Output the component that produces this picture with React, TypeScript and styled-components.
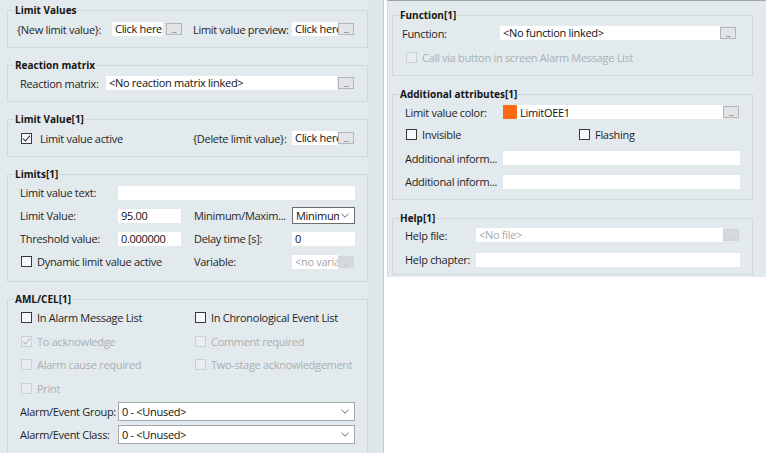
import React from 'react';
import styled, { createGlobalStyle } from 'styled-components';

const GlobalStyle = createGlobalStyle`
    html, body {
        margin: 0;
        padding: 0;
        background: #fff;
    }
    body {
        font-family: "Open Sans", "Noto Sans", sans-serif;
        font-size: 11px;
        letter-spacing: -0.3px;
        color: #1f1f1f;
        overflow: hidden;
    }
    * {
        box-sizing: border-box;
    }
`;

const Screen = styled.div`
    display: flex;
    align-items: flex-start;
    gap: 3px;
    width: 766px;
    height: 453px;
`;

const LeftPane = styled.div`
    display: flex;
    width: 384px;
    height: 453px;
    background: #e3eaed;
    overflow: hidden;
`;

const LeftContent = styled.div`
    flex: 1;
    padding: 3px 0 0 7px;
    display: flex;
    flex-direction: column;
    gap: 10px;
`;

const ScrollTrack = styled.div`
    width: 16px;
    height: 100%;
    background: #dfe6e9;
    border-right: 1px solid #c6cdd0;
`;

const RightPane = styled.div`
    width: 379px;
    height: 277px;
    background: #e3eaed;
    border-top: 1px solid #a2a6a8;
    border-left: 1px solid #d3dadd;
    padding: 7px 13px 0 4px;
    display: flex;
    flex-direction: column;
    gap: 11px;
`;

const Group = styled.fieldset<{ $padBottom?: number }>`
    margin: 0;
    min-width: 0;
    width: 361px;
    padding: 0 12px ${(p) => p.$padBottom ?? 8}px 12px;
    border: 1px solid #d0d8db;
`;

const Legend = styled.legend`
    margin-left: -6px;
    padding: 0 1px;
    font-size: 10px;
    font-weight: 700;
    line-height: 14px;
    letter-spacing: 0;
    color: #141414;
`;

const Row = styled.div<{ $h: number; $mt?: number }>`
    display: flex;
    align-items: center;
    height: ${(p) => p.$h}px;
    margin-top: ${(p) => p.$mt ?? 0}px;
`;

const FormGrid = styled.div<{ $cols: string; $row: number }>`
    display: grid;
    grid-template-columns: ${(p) => p.$cols};
    grid-auto-rows: ${(p) => p.$row}px;
    align-items: center;
`;

const Label = styled.span<{ $w?: number; $dim?: boolean; $shift?: number }>`
    flex: none;
    width: ${(p) => (p.$w ? `${p.$w}px` : 'auto')};
    margin-left: ${(p) => p.$shift ?? 0}px;
    white-space: nowrap;
    overflow: hidden;
    color: ${(p) => (p.$dim ? '#a8b0b3' : '#1f1f1f')};
`;

const TextBox = styled.div<{ $w: number; $dim?: boolean; $span?: number }>`
    flex: none;
    width: ${(p) => p.$w}px;
    height: 14px;
    padding: 0 3px;
    background: #fff;
    line-height: 14px;
    white-space: nowrap;
    overflow: hidden;
    color: ${(p) => (p.$dim ? '#a3a7a9' : '#111')};
    grid-column: ${(p) => (p.$span ? `span ${p.$span}` : 'auto')};
`;

const DotsButton = styled.div<{ $disabled?: boolean; $ml?: number }>`
    flex: none;
    width: 16px;
    height: 12px;
    margin-left: ${(p) => p.$ml ?? 0}px;
    border: 1px solid ${(p) => (p.$disabled ? '#d2d6d8' : '#b2b6b8')};
    background: ${(p) => (p.$disabled ? '#d6dadc' : '#e2e4e5')};
    color: ${(p) => (p.$disabled ? '#b4b8ba' : '#4a4a4a')};
    font-size: 8px;
    line-height: 11px;
    text-align: center;
    letter-spacing: -0.5px;
`;

const Field = styled.div<{ $span?: number }>`
    display: flex;
    align-items: center;
    grid-column: ${(p) => (p.$span ? `span ${p.$span}` : 'auto')};
`;

const SelectBox = styled.div<{ $w: number; $h: number; $strong?: boolean }>`
    flex: none;
    display: flex;
    align-items: center;
    justify-content: space-between;
    width: ${(p) => p.$w}px;
    height: ${(p) => p.$h}px;
    padding: 0 5px 0 3px;
    background: #fff;
    border: 1px solid ${(p) => (p.$strong ? '#6c6c6c' : '#a2a8ab')};
    color: #111;
`;

const SelectValue = styled.span<{ $w?: number }>`
    width: ${(p) => (p.$w ? `${p.$w}px` : 'auto')};
    white-space: nowrap;
    overflow: hidden;
`;

const CheckLabel = styled.label<{ $disabled?: boolean; $gap: number }>`
    display: flex;
    align-items: center;
    gap: ${(p) => p.$gap}px;
    margin-left: 1px;
    white-space: nowrap;
    color: ${(p) => (p.$disabled ? '#a8b0b3' : '#1f1f1f')};
`;

const Box = styled.span<{ $disabled?: boolean }>`
    flex: none;
    display: flex;
    align-items: center;
    justify-content: center;
    width: 11px;
    height: 11px;
    border: 1px solid ${(p) => (p.$disabled ? '#c9d1d4' : '#3a3a3a')};
    background: ${(p) => (p.$disabled ? '#e8eef0' : '#f7f9fa')};
`;

const ColorField = styled.div`
    flex: none;
    display: flex;
    align-items: center;
    gap: 3px;
    width: 220px;
    height: 14px;
    background: #fff;
    white-space: nowrap;
    color: #111;
`;

const Swatch = styled.span<{ $color: string }>`
    width: 14px;
    height: 14px;
    background: ${(p) => p.$color};
`;

const Chevron = () => (
    <svg width="8" height="5" viewBox="0 0 8 5">
        <polyline points="0.5,0.8 4,4.2 7.5,0.8" fill="none" stroke="#6a6a6a" strokeWidth="1" />
    </svg>
);

const Check = ({
    label,
    checked,
    disabled,
    gap = 5,
}: {
    label: string;
    checked?: boolean;
    disabled?: boolean;
    gap?: number;
}) => (
    <CheckLabel $disabled={disabled} $gap={gap}>
        <Box $disabled={disabled}>
            {checked && (
                <svg width="9" height="9" viewBox="0 0 9 9">
                    <polyline
                        points="1,4.6 3.4,7 8,1.6"
                        fill="none"
                        stroke={disabled ? '#b4bcbf' : '#333'}
                        strokeWidth="1.1"
                    />
                </svg>
            )}
        </Box>
        {label}
    </CheckLabel>
);

const Select = ({ value, w, h, strong, valueW }: { value: string; w: number; h: number; strong?: boolean; valueW?: number }) => (
    <SelectBox $w={w} $h={h} $strong={strong}>
        <SelectValue $w={valueW}>{value}</SelectValue>
        <Chevron />
    </SelectBox>
);

export default function App() {
    return (
        <>
            <GlobalStyle />
            <Screen>
                <LeftPane>
                    <LeftContent>
                        <Group $padBottom={10}>
                            <Legend>Limit Values</Legend>
                            <Row $h={16} $mt={4}>
                                <Label $w={95} $shift={-3}>{'{New limit value}:'}</Label>
                                <TextBox $w={51}>Click here</TextBox>
                                <DotsButton $ml={3}>...</DotsButton>
                                <Label $w={99} $shift={11}>Limit value preview:</Label>
                                <TextBox $w={46}>Click here</TextBox>
                                <DotsButton>...</DotsButton>
                            </Row>
                        </Group>

                        <Group $padBottom={10}>
                            <Legend>Reaction matrix</Legend>
                            <Row $h={16} $mt={3}>
                                <Label $w={86}>Reaction matrix:</Label>
                                <TextBox $w={231}>&lt;No reaction matrix linked&gt;</TextBox>
                                <DotsButton $ml={1}>...</DotsButton>
                            </Row>
                        </Group>

                        <Group $padBottom={10}>
                            <Legend>Limit Value[1]</Legend>
                            <Row $h={16} $mt={4}>
                                <Field style={{ width: 173 }}>
                                    <Check label="Limit value active" checked gap={8} />
                                </Field>
                                <Label $w={99}>{'{Delete limit value}:'}</Label>
                                <TextBox $w={46}>Click here</TextBox>
                                <DotsButton>...</DotsButton>
                            </Row>
                        </Group>

                        <Group $padBottom={8}>
                            <Legend>Limits[1]</Legend>
                            <FormGrid $cols="98px 76px 98px 63px" $row={23}>
                                <Label>Limit value text:</Label>
                                <TextBox $w={237} $span={3} />
                                <Label>Limit Value:</Label>
                                <TextBox $w={63}>95.00</TextBox>
                                <Label $w={96}>Minimum/Maxim...</Label>
                                <Select value="Minimum" w={63} h={17} strong valueW={43} />
                                <Label>Threshold value:</Label>
                                <TextBox $w={63}>0.000000</TextBox>
                                <Label>Delay time [s]:</Label>
                                <TextBox $w={63}>0</TextBox>
                                <Field $span={2}>
                                    <Check label="Dynamic limit value active" />
                                </Field>
                                <Label>Variable:</Label>
                                <Field>
                                    <TextBox $w={46} $dim>&lt;no variable&gt;</TextBox>
                                    <DotsButton $disabled>...</DotsButton>
                                </Field>
                            </FormGrid>
                        </Group>

                        <Group $padBottom={8}>
                            <Legend>AML/CEL[1]</Legend>
                            <FormGrid $cols="174px 1fr" $row={23.5}>
                                <Check label="In Alarm Message List" />
                                <Check label="In Chronological Event List" />
                                <Check label="To acknowledge" checked disabled />
                                <Check label="Comment required" disabled />
                                <Check label="Alarm cause required" disabled />
                                <Check label="Two-stage acknowledgement" disabled />
                                <Check label="Print" disabled />
                            </FormGrid>
                            <Row $h={23}>
                                <Label $w={98}>Alarm/Event Group:</Label>
                                <Select value="0 - <Unused>" w={237} h={19} />
                            </Row>
                            <Row $h={23}>
                                <Label $w={98}>Alarm/Event Class:</Label>
                                <Select value="0 - <Unused>" w={237} h={19} />
                            </Row>
                        </Group>
                    </LeftContent>
                    <ScrollTrack />
                </LeftPane>

                <RightPane>
                    <Group $padBottom={5}>
                        <Legend>Function[1]</Legend>
                        <Row $h={22}>
                            <Label $w={98} $shift={-3}>Function:</Label>
                            <TextBox $w={220}>&lt;No function linked&gt;</TextBox>
                            <DotsButton>...</DotsButton>
                        </Row>
                        <Row $h={26}>
                            <Check label="Call via button in screen Alarm Message List" disabled />
                        </Row>
                    </Group>

                    <Group $padBottom={6}>
                        <Legend>Additional attributes[1]</Legend>
                        <Row $h={22}>
                            <Label $w={98}>Limit value color:</Label>
                            <ColorField>
                                <Swatch $color="#ff6a17" />
                                LimitOEE1
                            </ColorField>
                            <DotsButton>...</DotsButton>
                        </Row>
                        <FormGrid $cols="173px 1fr" $row={23}>
                            <Check label="Invisible" />
                            <Check label="Flashing" />
                        </FormGrid>
                        <Row $h={24}>
                            <Label $w={98}>Additional inform...</Label>
                            <TextBox $w={237} />
                        </Row>
                        <Row $h={23}>
                            <Label $w={98}>Additional inform...</Label>
                            <TextBox $w={237} />
                        </Row>
                    </Group>

                    <Group $padBottom={3}>
                        <Legend>Help[1]</Legend>
                        <Row $h={20}>
                            <Label $w={71}>Help file:</Label>
                            <TextBox $w={247} $dim>&lt;No file&gt;</TextBox>
                            <DotsButton $disabled>...</DotsButton>
                        </Row>
                        <Row $h={23} $mt={3}>
                            <Label $w={71}>Help chapter:</Label>
                            <TextBox $w={264} />
                        </Row>
                    </Group>
                </RightPane>
            </Screen>
        </>
    );
}
